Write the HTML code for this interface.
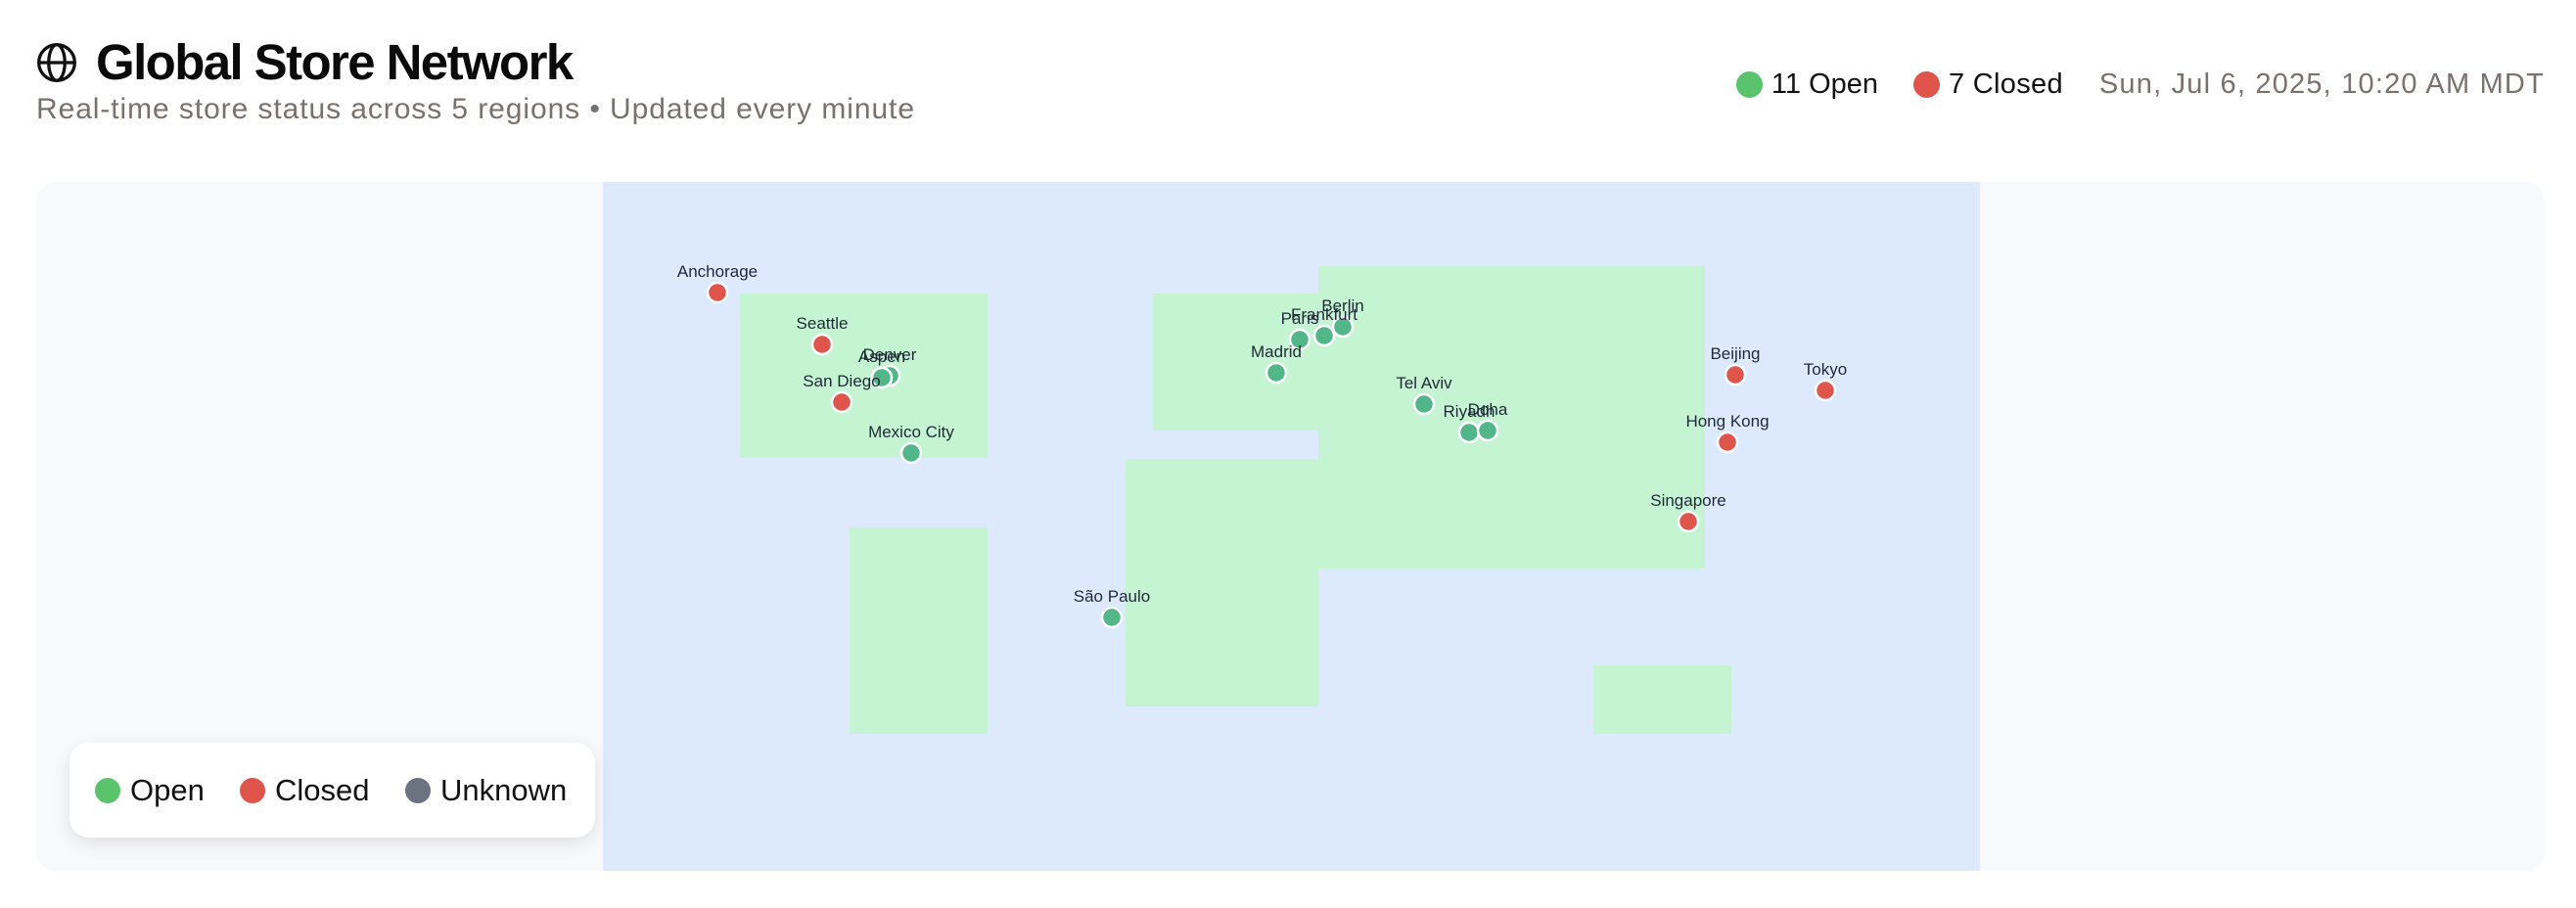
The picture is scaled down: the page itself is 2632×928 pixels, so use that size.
<!DOCTYPE html>
<html><head><meta charset="utf-8"><style>
body{margin:0;width:2632px;height:928px;background:#fff;font-family:"Liberation Sans",sans-serif;position:relative;overflow:hidden}
.a{position:absolute;white-space:nowrap}
</style></head><body>
<svg class="a" style="left:36px;top:42px" width="44" height="44" viewBox="0 0 24 24" fill="none" stroke="#111" stroke-width="1.8"><circle cx="12" cy="12" r="10"/><ellipse cx="12" cy="12" rx="4.5" ry="10"/><line x1="2" y1="12" x2="22" y2="12"/></svg>
<div class="a" style="left:98px;top:34px;font-size:51px;font-weight:bold;color:#0a0a0a;letter-spacing:-1.6px">Global Store Network</div>
<div class="a" style="left:37px;top:95px;font-size:30px;letter-spacing:0.92px;color:#78716c">Real-time store status across 5 regions • Updated every minute</div>
<div class="a" style="right:32px;top:66px;display:flex;align-items:center;font-size:29px;height:40px">
<span style="width:27px;height:27px;border-radius:50%;background:#5ac46c;margin-right:9px"></span><span style="color:#111">11 Open</span>
<span style="width:27px;height:27px;border-radius:50%;background:#e0554b;margin:0 9px 0 36px"></span><span style="color:#111;letter-spacing:0.3px">7 Closed</span>
<span style="color:#78716c;margin-left:37px;letter-spacing:1.2px">Sun, Jul 6, 2025, 10:20 AM MDT</span>
</div>
<div class="a" style="left:37px;top:186px;width:2563px;height:704px;border-radius:20px;background:#f8f9fb;overflow:hidden">
<svg width="2563" height="704" style="position:absolute;left:0;top:0" font-family="Liberation Sans, sans-serif" font-size="17" fill="#1f2937" text-anchor="middle">
<g transform="translate(-37,-186)">
<rect x="616" y="186" width="1407" height="704" fill="#dde9fc"/>
<g fill="#c5f4d3">
<rect x="756" y="300" width="253" height="168"/>
<rect x="868" y="539" width="141" height="211"/>
<rect x="1178" y="300" width="169" height="140"/>
<rect x="1347" y="272" width="395" height="309"/>
<rect x="1150" y="469" width="197" height="253"/>
<rect x="1628" y="680" width="141" height="70"/>
</g>
<g stroke="#fff" stroke-width="2.5">
<circle cx="733" cy="299" r="10" fill="#e0554b"/>
<circle cx="840" cy="352" r="10" fill="#e0554b"/>
<circle cx="909" cy="384" r="10" fill="#52b788"/>
<circle cx="901" cy="386" r="10" fill="#52b788"/>
<circle cx="860" cy="411" r="10" fill="#e0554b"/>
<circle cx="931" cy="463" r="10" fill="#52b788"/>
<circle cx="1136" cy="631" r="10" fill="#52b788"/>
<circle cx="1304" cy="381" r="10" fill="#52b788"/>
<circle cx="1328" cy="347" r="10" fill="#52b788"/>
<circle cx="1353" cy="343" r="10" fill="#52b788"/>
<circle cx="1372" cy="334" r="10" fill="#52b788"/>
<circle cx="1455" cy="413" r="10" fill="#52b788"/>
<circle cx="1501" cy="442" r="10" fill="#52b788"/>
<circle cx="1520" cy="440" r="10" fill="#52b788"/>
<circle cx="1773" cy="383" r="10" fill="#e0554b"/>
<circle cx="1865" cy="399" r="10" fill="#e0554b"/>
<circle cx="1765" cy="452" r="10" fill="#e0554b"/>
<circle cx="1725" cy="533" r="10" fill="#e0554b"/>
</g>
<text x="733" y="283">Anchorage</text>
<text x="840" y="336">Seattle</text>
<text x="909" y="368">Denver</text>
<text x="901" y="370">Aspen</text>
<text x="860" y="395">San Diego</text>
<text x="931" y="447">Mexico City</text>
<text x="1136" y="615">São Paulo</text>
<text x="1304" y="365">Madrid</text>
<text x="1328" y="331">Paris</text>
<text x="1353" y="327">Frankfurt</text>
<text x="1372" y="318">Berlin</text>
<text x="1455" y="397">Tel Aviv</text>
<text x="1501" y="426">Riyadh</text>
<text x="1520" y="424">Doha</text>
<text x="1773" y="367">Beijing</text>
<text x="1865" y="383">Tokyo</text>
<text x="1765" y="436">Hong Kong</text>
<text x="1725" y="517">Singapore</text>
</g></svg>
</div>
<div class="a" style="left:71px;top:759px;width:537px;height:97px;border-radius:20px;background:#fff;box-shadow:0 6px 18px rgba(0,0,0,0.1)"></div>
<div class="a" style="left:97px;top:795px;width:26px;height:26px;border-radius:50%;background:#5ac46c"></div>
<div class="a" style="left:133px;top:790px;font-size:31px;color:#111">Open</div>
<div class="a" style="left:245px;top:795px;width:26px;height:26px;border-radius:50%;background:#e0554b"></div>
<div class="a" style="left:281px;top:790px;font-size:31px;color:#111">Closed</div>
<div class="a" style="left:414px;top:795px;width:26px;height:26px;border-radius:50%;background:#6b7280"></div>
<div class="a" style="left:450px;top:790px;font-size:31px;color:#111">Unknown</div>
</body></html>
